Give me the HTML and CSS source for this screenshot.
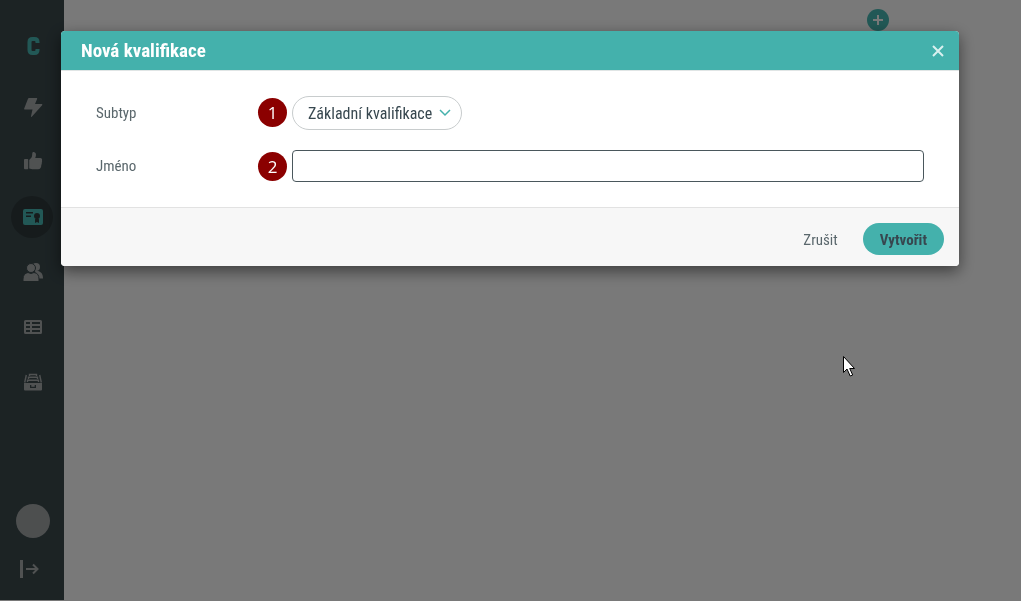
FILE: index.html
```html
<!DOCTYPE html>
<html lang="cs">
<head>
    <meta charset="UTF-8">
    <meta name="viewport" content="width=device-width, initial-scale=1.0">
    <title>Nová kvalifikace</title>
    <link rel="stylesheet" href="styles.css">
</head>
<body>

    <div class="page">
        <nav class="sidebar">
            <a href="#" class="logo" aria-label="Domů">
                <svg width="22" height="22" viewBox="0 0 22 22"><path d="M16.500 8V7q0-3-3-3h-2q-3 0-3 3v8q0 3 3 3h2q3 0 3-3v-1" fill="none" stroke="currentColor" stroke-width="4"/></svg>
            </a>
            <div class="menu">
                <a href="#" class="item" aria-label="Aktivity">
                    <svg width="22" height="22" viewBox="0 0 22 22"><path d="M8 2h7.500c.6 0 .8.400.6.900L14 8h6.500c.8 0 1 .6.6 1.200L11 20.600c-.5.600-1.200.3-1-.4L11.500 13.500H4c-.7 0-1-.4-.8-1L7 2.800c.2-.5.500-.8 1-.8z"/></svg>
                </a>
                <a href="#" class="item" aria-label="Hodnocení">
                    <svg width="22" height="22" viewBox="0 0 22 22"><path d="M4 8h2.500a.7.7 0 0 1 .7.700V17.500a.7.7 0 0 1-.7.700H4a1 1 0 0 1-1-1V9a1 1 0 0 1 1-1zM8.200 9l2.300-2.500C11.500 5 11 2.500 11.500 1.500c1-1 3.500-.3 3.500 2.300 0 1.200-.4 2.300-.8 3.200h5c1.500 0 2.200 1 1.800 2.300.2 1 .1 1.700-.2 2.400.1.900-.1 1.600-.5 2.300 0 2.700-.9 4.200-3.300 4.200h-4.500c-1.800 0-2.800-.7-4.300-.8z"/></svg>
                </a>
                <a href="#" class="item active" aria-label="Kvalifikace">
                    <svg width="22" height="22" viewBox="0 0 22 22"><rect x="2" y="3" width="20" height="16" rx="2"/><g class="cut"><path d="M5 6h7v1.500H5zM5 9.500h5V11H5z"/><circle cx="16" cy="10" r="3"/><path d="M15 12h2l1 1.500V17l-2-1-2 1v-3.500z"/></g></svg>
                </a>
                <a href="#" class="item" aria-label="Lidé">
                    <svg width="22" height="22" viewBox="0 0 22 22"><circle cx="15" cy="6" r="4"/><path d="M14 10h3c3 .8 5 3 5 7.500h-6z"/><g class="outline"><circle cx="10" cy="7" r="4.500"/><path d="M2 20.500v-2.500c0-3.700 2-6 5-6.500l3 1 3-1c3.500.500 5 2.800 5 6.500v2.500z"/></g></svg>
                </a>
                <a href="#" class="item" aria-label="Tabulka">
                    <svg width="22" height="22" viewBox="0 0 22 22"><path fill-rule="evenodd" d="M4.500 4h15A1.500 1.500 0 0 1 21 5.500v11a1.500 1.500 0 0 1-1.500 1.500h-15A1.500 1.500 0 0 1 3 16.500v-11A1.500 1.500 0 0 1 4.500 4zM5 6v2h4V6zM11 6v2h8V6zM5 10v2h4v-2zM11 10v2h8v-2zM5 14v2h4v-2zM11 14v2h8v-2z"/></svg>
                </a>
                <a href="#" class="item" aria-label="Archiv">
                    <svg width="22" height="22" viewBox="0 0 22 22"><path d="M8.500 5V3.500h7V5M7.500 8V6.300h9V8M6.500 11V9.300h11V11M5.300 4L3.700 11.500M18.700 4l1.600 7.500" fill="none" stroke="currentColor" stroke-width="1.400"/><path fill-rule="evenodd" d="M3 12h18v6.500a1 1 0 0 1-1 1H4a1 1 0 0 1-1-1zM9 14v3h6v-3h-1.300v1.700h-3.400V14z"/></svg>
                </a>
            </div>
            <div class="user">
                <span class="avatar"></span>
                <a href="#" class="logout" aria-label="Odhlásit">
                    <svg width="26" height="22" viewBox="0 0 26 22"><path d="M1.500 2v18" stroke="currentColor" stroke-width="3"/><path d="M6 11h12M13 6.500l4.500 4.500-4.500 4.500" fill="none" stroke="currentColor" stroke-width="2"/></svg>
                </a>
            </div>
        </nav>
        <main class="content">
            <button type="button" class="add" aria-label="Přidat">
                <svg width="12" height="12" viewBox="0 0 12 12"><path d="M6 1v10M1 6h10" stroke="currentColor" stroke-width="2"/></svg>
            </button>
        </main>
    </div>

    <div class="overlay">
        <form class="dialog" role="dialog" aria-labelledby="dialog-title">
            <header class="dialog-header">
                <h1 id="dialog-title">Nová kvalifikace</h1>
                <button type="button" class="close" aria-label="Zavřít">
                    <svg width="12" height="12" viewBox="0 0 12 12"><path d="M1 1l10 10M11 1L1 11" stroke="currentColor" stroke-width="2"/></svg>
                </button>
            </header>
            <div class="dialog-body">
                <div class="row">
                    <label for="subtype">Subtyp</label>
                    <div class="field">
                        <span class="step">1</span>
                        <div class="select">
                            <select id="subtype">
                                <option>Základní kvalifikace</option>
                            </select>
                            <svg class="chevron" width="12" height="8" viewBox="0 0 12 8"><path d="M1 1l5 5 5-5" fill="none" stroke="currentColor" stroke-width="1.500"/></svg>
                        </div>
                    </div>
                </div>
                <div class="row">
                    <label for="name">Jméno</label>
                    <div class="field">
                        <span class="step">2</span>
                        <input type="text" id="name">
                    </div>
                </div>
            </div>
            <footer class="dialog-footer">
                <button type="button" class="btn">Zrušit</button>
                <button type="submit" class="btn primary">Vytvořit</button>
            </footer>
        </form>
    </div>

    <!-- mouse pointer -->
    <svg class="pointer" width="14" height="22" viewBox="0 0 14 22"><path d="M.5.500v16l3.500-3.500 3.200 7 2.500-1-3-6.500h4.800z" fill="#fff" stroke="#000"/></svg>

</body>
</html>
```
FILE: styles.css
```css
* {
    box-sizing: border-box;
}

body {
    margin: 0;
    background: #f2f2f2;
    color: #37474f;
    font-family: "Roboto Condensed", Roboto, "Liberation Sans", sans-serif;
    font-size: 15px;
}

button, input, select {
    font: inherit;
    color: inherit;
}

svg {
    display: block;
    fill: currentColor;
}

.page {
    display: flex;
    min-height: calc(100vh - 1px);
}

/* Sidebar */
.sidebar {
    display: flex;
    flex-direction: column;
    align-items: center;
    width: 64px;
    padding: 35px 0 20px;
    background: #384649;
    color: #a0a4a5;
}

.logo {
    color: #44b1ac;
}

.menu {
    display: flex;
    flex-direction: column;
    gap: 13px;
    margin-top: 29px;
}

.item {
    display: grid;
    place-items: center;
    width: 42px;
    height: 42px;
    border-radius: 50%;
    color: inherit;
}

.item.active {
    background: #2d3739;
    color: #44b1ac;
}

.cut {
    fill: #2d3739;
}

.outline {
    stroke: #384649;
    stroke-width: 1px;
}

.user {
    display: flex;
    flex-direction: column;
    align-items: center;
    gap: 20px;
    margin-top: auto;
    padding-left: 2px;
}

.avatar {
    width: 34px;
    height: 34px;
    border-radius: 50%;
    background: #9a9e9f;
}

.logout {
    color: inherit;
}

.content {
    flex: 1;
    padding: 9px 132px;
}

.add {
    display: grid;
    place-items: center;
    width: 22px;
    height: 22px;
    margin-left: auto;
    padding: 0;
    border: 0;
    border-radius: 50%;
    background: #44b1ac;
    color: #f2f2f2;
}

/* Dialog */
.overlay {
    position: fixed;
    inset: 0;
    padding: 31px 62px 31px 61px;
    background: rgba(0, 0, 0, 0.5);
}

.dialog {
    border-radius: 4px;
    background: #fff;
    box-shadow: 0 5px 15px rgba(0, 0, 0, 0.5);
    overflow: hidden;
}

.dialog-header {
    display: flex;
    justify-content: space-between;
    align-items: center;
    height: 40px;
    padding: 0 15px 0 20px;
    border-bottom: 1px solid #e0e5e5;
    background: #44b1ac;
    color: #fff;
}

.dialog-header h1 {
    margin: 0;
    font-size: 19px;
    font-weight: 700;
}

.close {
    padding: 0;
    border: 0;
    background: none;
    color: #daf0ef;
}

.dialog-body {
    display: grid;
    gap: 20px;
    padding: 25px 35px;
}

.row {
    display: grid;
    grid-template-columns: 196px 1fr;
    align-items: center;
}

.row label {
    color: #5a676c;
}

.field {
    position: relative;
}

.step {
    position: absolute;
    top: 2px;
    right: 100%;
    width: 29px;
    margin-right: 5px;
    border-radius: 50%;
    background: #8b0000;
    color: #fff;
    font-family: "Open Sans", sans-serif;
    font-size: 17px;
    line-height: 29px;
    text-align: center;
}

.select {
    position: relative;
    width: fit-content;
}

.select select {
    appearance: none;
    height: 34px;
    padding: 0 28px 0 15px;
    border: 1px solid #c8cccd;
    border-radius: 17px;
    background: #fff;
    font-size: 16px;
}

.chevron {
    position: absolute;
    top: 13px;
    right: 11px;
    color: #44b1ac;
    pointer-events: none;
}

.field input {
    display: block;
    width: 100%;
    height: 32px;
    padding: 0 10px;
    border: 1px solid #4a575c;
    border-radius: 4px;
    background: #fff;
}

.dialog-footer {
    display: flex;
    justify-content: flex-end;
    gap: 8px;
    padding: 15px 15px 11px;
    border-top: 1px solid #e2e2e2;
    background: #f7f7f7;
}

.btn {
    height: 32px;
    padding: 2px 17px 0;
    border: 0;
    border-radius: 16px;
    background: none;
    color: #5a676c;
}

.btn.primary {
    background: #44b1ac;
    color: #37474f;
    font-weight: 700;
}

.pointer {
    position: fixed;
    top: 356px;
    left: 843px;
}
```
